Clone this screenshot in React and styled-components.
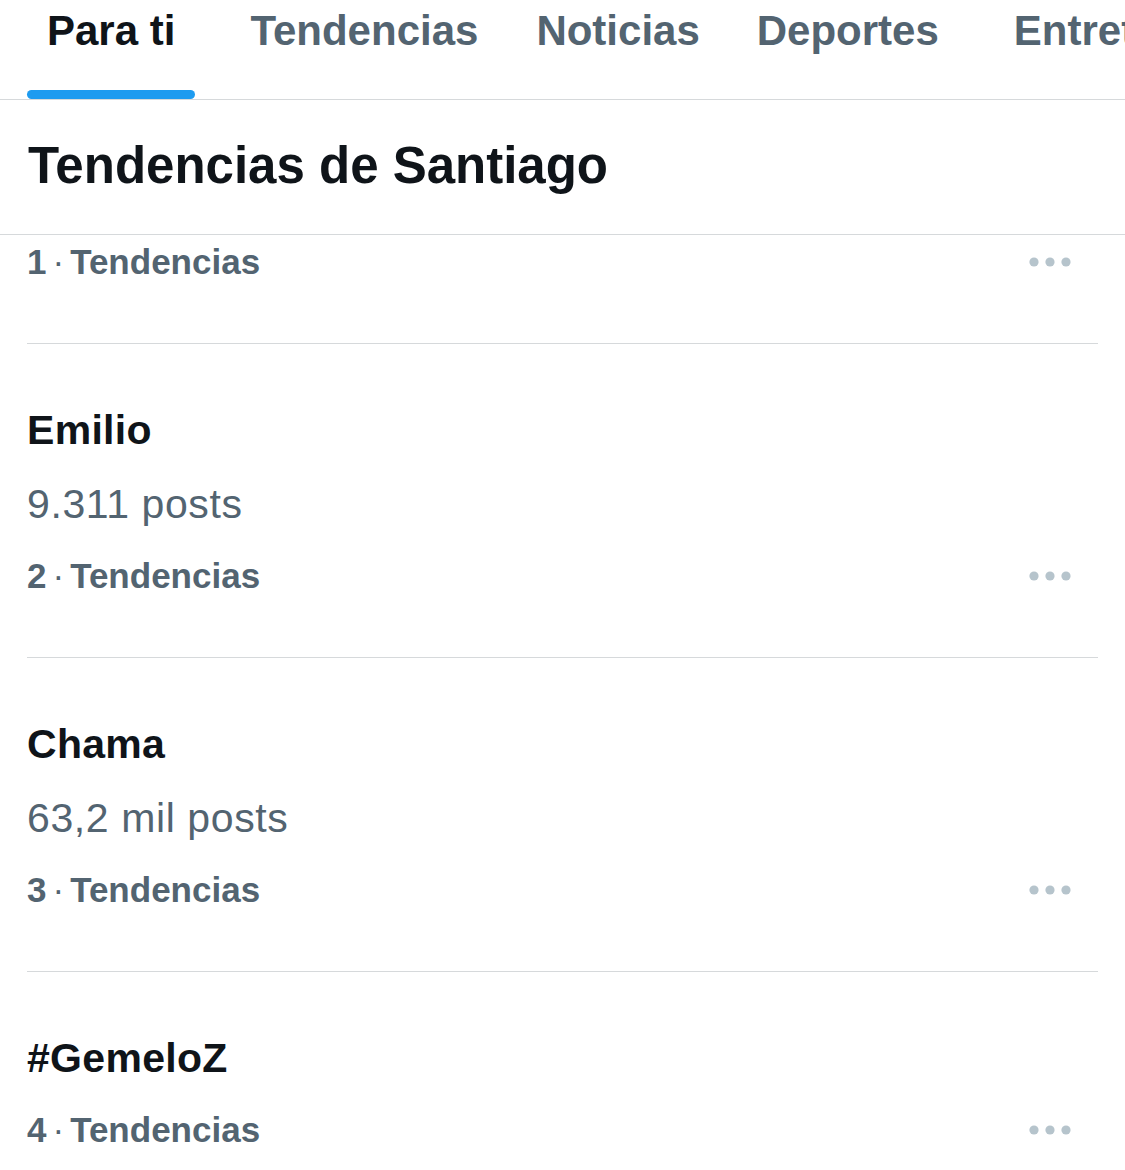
import React from 'react';
import styled, { createGlobalStyle } from 'styled-components';

const GlobalStyle = createGlobalStyle`
    body {
        margin: 0;
        background: #ffffff;
        font-family: "Liberation Sans", Arial, sans-serif;
        overflow: hidden;
    }
`;

const Page = styled.div`
    width: 1125px;
    height: 1170px;
    overflow: hidden;
    background: #ffffff;
`;

const TabBar = styled.nav`
    display: flex;
    padding-left: 27px;
    border-bottom: 1px solid #d6d9db;
    white-space: nowrap;
    overflow: hidden;
`;

const Tab = styled.div`
    display: flex;
    flex-direction: column;
    flex-shrink: 0;
    height: 99px;
    padding: 0 20px;
    margin-left: ${p => p.$gap || 0}px;
`;

const TabLabel = styled.span`
    font-size: 42px;
    line-height: 62px;
    font-weight: 700;
    color: ${p => (p.$active ? '#0f1419' : '#536471')};
`;

const Indicator = styled.div`
    margin: auto -20px 0;
    height: 9px;
    border-radius: 5px;
    background: ${p => (p.$active ? '#1d9bf0' : 'transparent')};
`;

const Header = styled.header`
    padding: 36px 28px 38px;
    border-bottom: 1px solid #d6d9db;
`;

const Title = styled.h1`
    margin: 0;
    font-size: 51px;
    line-height: 60px;
    font-weight: 700;
    color: #0f1419;
`;

const Row = styled.div`
    display: flex;
    margin: 0 27px;
    padding: ${p => (p.$first ? 5 : 62)}px 0 59px;
    border-bottom: 1px solid #d6d9db;
`;

const Content = styled.div`
    flex: 1;
    display: flex;
    flex-direction: column;
    gap: 26px;
`;

const Name = styled.div`
    font-size: 41px;
    line-height: 48px;
    font-weight: 700;
    letter-spacing: 0.3px;
    color: #0f1419;
`;

const Posts = styled.div`
    font-size: 41px;
    line-height: 48px;
    letter-spacing: 0.6px;
    color: #536471;
`;

const Meta = styled.div`
    font-size: 35px;
    line-height: 44px;
    font-weight: 700;
    color: #536471;
`;

const Dot = styled.span`
    font-weight: 400;
    margin: 0 6px;
`;

const More = styled.div`
    align-self: flex-end;
    display: flex;
    align-items: center;
    height: 44px;
    margin-right: 27px;
`;

const tabs = [
    { label: 'Para ti', active: true, gap: 0 },
    { label: 'Tendencias', gap: 35 },
    { label: 'Noticias', gap: 18 },
    { label: 'Deportes', gap: 17 },
    { label: 'Entretenimiento', gap: 35 },
];

const trends = [
    { rank: 1, first: true },
    { rank: 2, name: 'Emilio', posts: '9.311 posts' },
    { rank: 3, name: 'Chama', posts: '63,2 mil posts' },
    { rank: 4, name: '#GemeloZ' },
];

const Ellipsis = () => (
    <svg width="42" height="10" viewBox="0 0 42 10">
        <circle cx="5" cy="5" r="4.6" fill="#b6c4cc" />
        <circle cx="21" cy="5" r="4.6" fill="#b6c4cc" />
        <circle cx="37" cy="5" r="4.6" fill="#b6c4cc" />
    </svg>
);

const App = () => (
    <Page>
        <GlobalStyle />
        <TabBar>
            {tabs.map(tab => (
                <Tab key={tab.label} $gap={tab.gap}>
                    <TabLabel $active={tab.active}>{tab.label}</TabLabel>
                    <Indicator $active={tab.active} />
                </Tab>
            ))}
        </TabBar>
        <Header>
            <Title>Tendencias de Santiago</Title>
        </Header>
        {trends.map(trend => (
            <Row key={trend.rank} $first={trend.first}>
                <Content>
                    {trend.name && <Name>{trend.name}</Name>}
                    {trend.posts && <Posts>{trend.posts}</Posts>}
                    <Meta>
                        {trend.rank}<Dot>·</Dot>Tendencias
                    </Meta>
                </Content>
                <More>
                    <Ellipsis />
                </More>
            </Row>
        ))}
    </Page>
);

export default App;
